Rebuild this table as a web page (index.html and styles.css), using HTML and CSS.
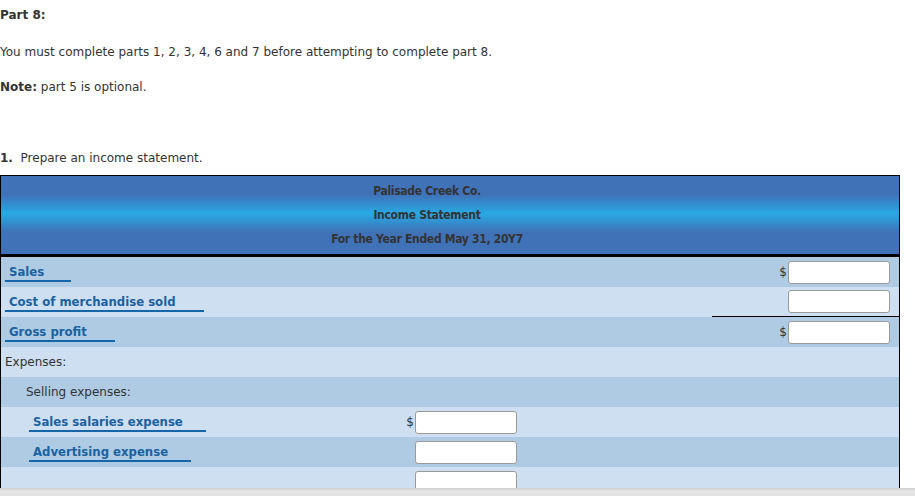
FILE: index.html
```html
<!DOCTYPE html>
<html>
<head>
<meta charset="utf-8">
<link rel="stylesheet" href="styles.css">
</head>
<body>
<div class="intro">
  <p class="part"><b>Part 8:</b></p>
  <p class="must">You must complete parts 1, 2, 3, 4, 6 and 7 before attempting to complete part 8.</p>
  <p class="note"><b>Note:</b> part 5 is optional.</p>
  <p class="step"><b>1.</b>&nbsp; Prepare an income statement.</p>
</div>
<div class="sheet">
  <div class="head">
    <div>Palisade Creek Co.</div>
    <div>Income Statement</div>
    <div>For the Year Ended May 31, 20Y7</div>
  </div>
  <div class="row dark">
    <div class="lab"><span class="sel w66">Sales</span></div>
    <div class="mid"></div><div class="gap"></div>
    <div class="amt"><span class="dol">$</span><span class="inp"></span></div>
  </div>
  <div class="row light">
    <div class="lab"><span class="sel w199">Cost of merchandise sold</span></div>
    <div class="mid"></div><div class="gap"></div>
    <div class="amt rule"><span class="inp"></span></div>
  </div>
  <div class="row dark">
    <div class="lab"><span class="sel w110">Gross profit</span></div>
    <div class="mid"></div><div class="gap"></div>
    <div class="amt"><span class="dol">$</span><span class="inp"></span></div>
  </div>
  <div class="row light">
    <div class="lab plain">Expenses:</div>
  </div>
  <div class="row dark">
    <div class="lab plain ind1">Selling expenses:</div>
  </div>
  <div class="row light">
    <div class="lab ind2"><span class="sel w177">Sales salaries expense</span></div>
    <div class="mid"><span class="dol">$</span><span class="inp"></span></div>
    <div class="gap"></div><div class="amt"></div>
  </div>
  <div class="row dark">
    <div class="lab ind2"><span class="sel w162">Advertising expense</span></div>
    <div class="mid"><span class="inp"></span></div>
    <div class="gap"></div><div class="amt"></div>
  </div>
  <div class="row light">
    <div class="lab ind2"><span class="sel w162"></span></div>
    <div class="mid"><span class="inp"></span></div>
    <div class="gap"></div><div class="amt"></div>
  </div>
</div>
<div class="hscroll"></div>
</body>
</html>
```
FILE: styles.css
```css
html { overflow: hidden; }
body {
  margin: 0;
  font-family: "DejaVu Sans", Verdana, sans-serif;
  font-size: 12px;
  color: #333;
  background: #fff;
}
.intro p { margin: 0; line-height: 16px; }
.part { padding-top: 7px; }
.must { margin-top: 21px !important; }
.note { margin-top: 19px !important; }
.step { margin-top: 55px !important; }
.sheet {
  margin-top: 9px;
  width: 898px;
  border: 1px solid #000;
  border-bottom: none;
}
.head {
  height: 81px;
  box-sizing: border-box;
  padding: 3px 46px 0 0;
  border-bottom: 3px solid #000;
  background: linear-gradient(#4072b8 0%, #4072b8 24%, #27a9e3 48%, #4072b8 72%, #4072b8 100%);
  text-align: center;
  font-weight: bold;
  font-family: "DejaVu Sans Condensed", "DejaVu Sans", sans-serif;
  font-size: 12px;
  letter-spacing: -0.3px;
  color: #333;
  line-height: 24px;
}
.row {
  display: grid;
  grid-template-columns: 399px 130px 182px 187px;
  height: 30px;
}
.dark { background: #aecbe3; }
.light { background: #cddff0; }
.lab {
  display: flex;
  align-items: center;
  padding-left: 4px;
}
.lab:has(.sel) { align-items: flex-start; padding-top: 4px; }
.plain { color: #333; }
.ind1 { padding-left: 25px; }
.ind2 { padding-left: 28px; }
.sel {
  box-sizing: border-box;
  height: 21px;
  padding: 3px 0 0 4px;
  border-bottom: 2px solid #1566a8;
  color: #1a62a1;
  font-weight: bold;
  font-family: "DejaVu Sans Condensed", "DejaVu Sans", sans-serif;
  font-size: 13px;
  line-height: 15px;
  white-space: nowrap;
}
.w66 { width: 66px; }
.w110 { width: 110px; }
.w162 { width: 162px; }
.w177 { width: 177px; }
.w199 { width: 199px; }
.mid, .amt {
  display: flex;
  align-items: center;
  justify-content: flex-end;
  box-sizing: border-box;
}
.mid { padding-right: 13px; }
.amt { padding-right: 9px; }
.rule { border-bottom: 1px solid #000; }
.dol { margin-right: 1px; color: #333; }
.inp {
  display: block;
  width: 102px;
  height: 23px;
  box-sizing: border-box;
  background: #fff;
  border: 1px solid #9a9a9a;
  border-radius: 3px;
}
.hscroll {
  position: fixed;
  left: 0;
  right: 0;
  bottom: 0;
  height: 8px;
  background: linear-gradient(#cfcfcf, #e6e6e6 40%, #e2e2e2);
}
```
